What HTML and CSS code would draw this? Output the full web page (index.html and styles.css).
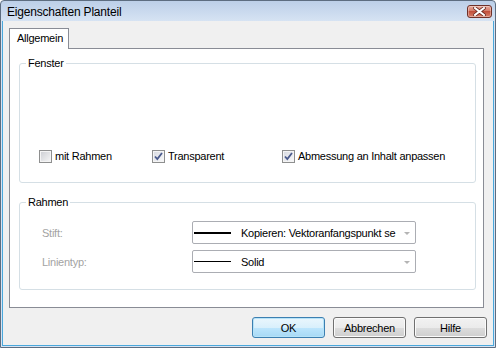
FILE: index.html
```html
<!DOCTYPE html>
<html lang="de">
<head>
    <meta charset="UTF-8">
    <title>Eigenschaften Planteil</title>
    <link rel="stylesheet" href="styles.css">
</head>
<body>

    <div class="window">
        <div class="titlebar">
            <span class="title">Eigenschaften Planteil</span>
            <button class="close-btn" title="Schließen">
                <svg width="13" height="9" viewBox="0 0 13 9">
                    <path d="M2 1 L11 8 M11 1 L2 8" stroke="#6b2a22" stroke-width="3.6" stroke-linecap="square"/>
                    <path d="M2 1 L11 8 M11 1 L2 8" stroke="#ffffff" stroke-width="2" stroke-linecap="square"/>
                </svg>
            </button>
        </div>

        <div class="client">
            <!-- Tabs -->
            <div class="tabs">
                <div class="tab active">Allgemein</div>
            </div>

            <div class="tab-panel">
                <!-- Fenster -->
                <fieldset class="group group-fenster">
                    <legend>Fenster</legend>
                    <div class="check-row">
                        <label class="check">
                            <span class="box"></span>
                            <span>mit Rahmen</span>
                        </label>
                        <label class="check">
                            <span class="box checked">
                                <svg width="11" height="11" viewBox="0 0 11 11"><path d="M2 5.5 L4.3 8 L9 2" fill="none" stroke="#4a5a8c" stroke-width="1.8"/></svg>
                            </span>
                            <span>Transparent</span>
                        </label>
                        <label class="check">
                            <span class="box checked">
                                <svg width="11" height="11" viewBox="0 0 11 11"><path d="M2 5.5 L4.3 8 L9 2" fill="none" stroke="#4a5a8c" stroke-width="1.8"/></svg>
                            </span>
                            <span>Abmessung an Inhalt anpassen</span>
                        </label>
                    </div>
                </fieldset>

                <!-- Rahmen -->
                <fieldset class="group group-rahmen">
                    <legend>Rahmen</legend>
                    <div class="field-list">
                        <div class="field-row">
                            <span class="field-label">Stift:</span>
                            <div class="combo">
                                <span class="pen-line"></span>
                                <span class="combo-text">Kopieren: Vektoranfangspunkt se</span>
                                <span class="arrow"></span>
                            </div>
                        </div>
                        <div class="field-row">
                            <span class="field-label">Linientyp:</span>
                            <div class="combo">
                                <span class="pen-line thin"></span>
                                <span class="combo-text">Solid</span>
                                <span class="arrow"></span>
                            </div>
                        </div>
                    </div>
                </fieldset>
            </div>

            <div class="buttons">
                <button class="btn default">OK</button>
                <button class="btn">Abbrechen</button>
                <button class="btn">Hilfe</button>
            </div>
        </div>
    </div>

</body>
</html>
```

FILE: styles.css
```css
/* General */
body {
    margin: 0;
    font-family: "Liberation Sans", Arial, sans-serif;
    font-size: 11px;
    letter-spacing: -0.25px;
    color: #000;
}

.window {
    width: 496px;
    height: 348px;
    box-sizing: border-box;
    border: 1px solid #5d6d80;
    border-radius: 4px 4px 0 0;
    background: linear-gradient(#bccfe8, #d6e3f3 20px);
    display: flex;
    flex-direction: column;
}

/* Title bar */
.titlebar {
    height: 20px;
    flex-shrink: 0;
    display: flex;
    align-items: center;
    justify-content: space-between;
    padding: 0 3px 0 6px;
}

.title {
    font-size: 12px;
    letter-spacing: -0.2px;
    margin-top: 1px;
}

.close-btn {
    width: 25px;
    height: 13px;
    padding: 0;
    border: 1px solid #6f3129;
    border-radius: 3px;
    background: linear-gradient(#e9a99b, #d27865 50%, #c24f3b 50%, #d8806a);
    box-shadow: inset 0 0 0 1px rgba(255, 255, 255, 0.35);
    display: flex;
    align-items: center;
    justify-content: center;
}

/* Client area */
.client {
    flex: 1;
    margin: 0 1px 1px 1px;
    border: 1px solid #4aa8dc;
    border-top: none;
    background: #f0f0f0;
    padding: 7px 9px 0 6px;
    display: flex;
    flex-direction: column;
}

.tabs {
    display: flex;
}

.tab {
    width: 60px;
    height: 21px;
    box-sizing: border-box;
    border: 1px solid #898c95;
    border-bottom: none;
    background: #fff;
    margin-bottom: -1px;
    position: relative;
    z-index: 1;
    padding-left: 7px;
    padding-top: 1px;
    line-height: 16px;
}

.tab-panel {
    height: 260px;
    box-sizing: border-box;
    border: 1px solid #898c95;
    background: #fff;
    padding: 0 7px 0 9px;
}

/* Group boxes */
.group {
    margin: 7px 0 0;
    padding: 0;
    border: 1px solid #d5dfe5;
    border-radius: 3px;
    min-width: 0;
}

.group legend {
    margin-left: 6px;
    padding: 0 2px;
    line-height: 14px;
}

.group-rahmen {
    margin-top: 12px;
}

.check-row {
    display: grid;
    grid-template-columns: 113px 130px auto;
    padding: 80px 0 19px 19px;
    line-height: 13px;
}

.check {
    display: flex;
    align-items: center;
    gap: 3px;
}

.box {
    width: 13px;
    height: 13px;
    box-sizing: border-box;
    border: 1px solid #8e8f8f;
    background: linear-gradient(135deg, #cbcdd2, #f7f7f7);
    box-shadow: inset 0 0 0 1px #f4f4f4;
    display: flex;
    align-items: center;
    justify-content: center;
}

.box.checked {
    background: linear-gradient(135deg, #d6d9e0, #fafafa);
}

.field-list {
    display: flex;
    flex-direction: column;
    gap: 6px;
    padding: 12px 0 16px 22px;
}

.field-row {
    display: flex;
    align-items: center;
}

.field-label {
    width: 150px;
    color: #a3a3a3;
}

.combo {
    width: 224px;
    height: 23px;
    box-sizing: border-box;
    border: 1px solid #abadb3;
    border-radius: 2px;
    background: #fff;
    display: flex;
    align-items: center;
    padding-left: 1px;
}

.pen-line {
    width: 37px;
    height: 2px;
    background: #000;
    flex-shrink: 0;
}

.pen-line.thin {
    height: 1px;
}

.combo-text {
    flex: 1;
    margin-left: 10px;
    white-space: nowrap;
}

.arrow {
    width: 0;
    height: 0;
    border-left: 3px solid transparent;
    border-right: 3px solid transparent;
    border-top: 3px solid #b4b4b4;
    margin: 2px 5px 0 6px;
}

/* Dialog buttons */
.buttons {
    display: flex;
    justify-content: flex-end;
    gap: 8px;
    margin-top: 9px;
    margin-right: -3px;
}

.btn {
    width: 73px;
    height: 21px;
    padding: 0;
    font-family: inherit;
    font-size: 11px;
    letter-spacing: -0.25px;
    color: #000;
    border: 1px solid #707070;
    border-radius: 3px;
    background: linear-gradient(#f2f2f2, #ebebeb 50%, #dddddd 50%, #cfcfcf);
    box-shadow: inset 0 0 0 1px #fbfbfb;
}

.btn.default {
    border-color: #3c7fb1;
    background: linear-gradient(#eaf6fd, #d9f0fc 50%, #bee6fd 50%, #a7d9f5);
    box-shadow: inset 0 0 0 1px #b6e3f8;
}
```
